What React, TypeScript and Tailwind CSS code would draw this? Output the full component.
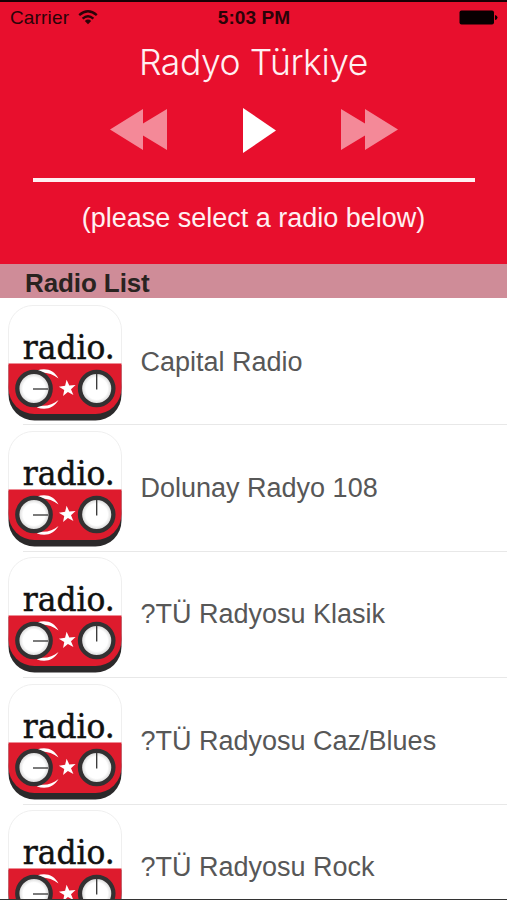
const stations = [
  'Capital Radio',
  'Dolunay Radyo 108',
  '?TÜ Radyosu Klasik',
  '?TÜ Radyosu Caz/Blues',
  '?TÜ Radyosu Rock',
];

function Knob({ cx, turned }: { cx: number; turned: boolean }) {
  return (
    <g>
      <circle cx={cx} cy="83.5" r="16.700" fill="url(#knobFace)" stroke="#333132" strokeWidth="4.300" />
      {turned ? (
        <path d={`M${cx - 1} 84H${cx + 14}`} stroke="#333" strokeWidth="1.3" />
      ) : (
        <path d={`M${cx} 84.500V69`} stroke="#333" strokeWidth="1.3" />
      )}
    </g>
  );
}

function RadioIcon() {
  return (
    <svg className="block h-[116px] w-[114px] shrink-0" viewBox="0 0 114 116">
      <defs>
        <clipPath id="iconShape">
          <rect x="0.5" y="0.5" width="113" height="108.5" rx="26" />
        </clipPath>
        <radialGradient id="knobFace">
          <stop offset="0.65" stopColor="#fff" />
          <stop offset="1" stopColor="#c9c9c9" />
        </radialGradient>
      </defs>
      <rect x="0.5" y="5" width="113" height="110.5" rx="26" fill="#2b292a" />
      <rect x="0.5" y="0.5" width="113" height="100" rx="24" fill="#fff" clipPath="url(#iconShape)" />
      <path d="M0.5 60V25A24.5 24.5 0 0 1 25 0.5H89A24.5 24.5 0 0 1 113.5 25V60" fill="#fff" stroke="#efefef" />
      <rect x="0" y="58.5" width="114" height="52" fill="#de1b2d" clipPath="url(#iconShape)" />
      <path d="M29 65.5C38 62.500 46 65 50.500 73.500C45 69 39 67 31 67.500ZM29 102.500C38 105.500 46 103 50.500 95C45 99.500 39 101.500 31 100.500Z" fill="#fff" />
      <path d="M0 -8.800L2.100 -2.900L8.400 -2.700L3.400 1.100L5.200 7.100L0 3.600L-5.200 7.100L-3.400 1.100L-8.400 -2.700L-2.100 -2.900Z" transform="translate(59.500 83.500) rotate(-6)" fill="#fff" />
      <Knob cx={26} turned />
      <Knob cx={88.7} turned={false} />
      <text x="14.8" y="54.300" textLength="92" lengthAdjust="spacingAndGlyphs" fill="#111" stroke="#111" strokeWidth="0.5" fontSize="33.5" style={{ fontFamily: '"DejaVu Serif", serif' }}>radio.</text>
    </svg>
  );
}

export default function App() {
  return (
    <div className="flex h-[900px] w-[507px] flex-col overflow-hidden border-t-2 border-b border-t-[#180004] border-b-[#333] bg-white font-['Liberation_Sans',Arial,sans-serif]">
      <header className="flex h-[262px] shrink-0 flex-col bg-[#e80f2d]">
        <div className="grid h-8 grid-cols-3 items-center pr-[9px] pl-[10px] text-[19px] text-[#2b0308]">
          <div className="flex items-center gap-[9px]">
            <span className="tracking-[0.15px]">Carrier</span>
            <svg className="-mt-0.5 h-[15px] w-5" viewBox="0 0 20 15">
              <path d="M1.200 5.200Q10 -2.500 18.800 5.200M4.600 8.600Q10 3.800 15.400 8.600" fill="none" stroke="currentColor" strokeWidth="2.400" />
              <path d="M6.800 11Q10 8.200 13.200 11L10 14.300Z" fill="currentColor" />
            </svg>
          </div>
          <span className="text-center font-bold tracking-[0.1px]">5:03 PM</span>
          <svg className="-mt-px h-[15px] w-[39px] justify-self-end" viewBox="0 0 39 15">
            <rect x="0.500" y="0.500" width="34.500" height="14" rx="2" fill="#080001" />
            <path d="M36 5Q38.500 5.500 38.500 7.500T36 10Z" fill="#080001" />
          </svg>
        </div>
        <h1 className="mt-[7px] h-11 text-center font-['Inter',sans-serif] text-[35.5px] leading-11 font-light tracking-[-0.45px] text-[#fff0f2]">Radyo Türkiye</h1>
        <div className="mt-[22px] flex h-[46px] items-start pl-[110px]">
          <svg className="mt-[2px] h-[41px] w-[58px]" viewBox="0 0 58 41">
            <path d="M0 20.500L33 0V14.500L57 0V41L33 26.500V41Z" fill="#f48998" />
          </svg>
          <svg className="ml-[75px] h-[46px] w-[33px]" viewBox="0 0 33 46">
            <path d="M0 1L33 23.500L0 46Z" fill="#fff" />
          </svg>
          <svg className="mt-[2px] ml-[65px] h-[41px] w-[58px]" viewBox="0 0 58 41">
            <path d="M57 20.500L24 0V14.500L0 0V41L24 26.500V41Z" fill="#f48998" />
          </svg>
        </div>
        <div className="mr-8 ml-[33px] mt-[25px] h-1 bg-[#fff0f2]" />
        <p className="mt-5 text-center text-[27px] leading-8 text-[#fff0f2]">(please select a radio below)</p>
      </header>
      <h2 className="h-[34px] shrink-0 bg-[#cf8c98] pl-[25px] text-[26px] leading-[38px] font-bold tracking-[-0.1px] text-[#29231f]">Radio List</h2>
      <ul className="shrink-0 pt-px">
        {stations.map((name) => (
          <li key={name} className="flex h-[126.4px] flex-col pl-[7.500px]">
            <div className="flex flex-1 items-start gap-[19px] pt-[5.500px]">
              <RadioIcon />
              <span className="text-[27px] leading-[115px] whitespace-nowrap text-[#575757]">{name}</span>
            </div>
            <div className="ml-[15px] h-px shrink-0 bg-[#e8e8e8]" />
          </li>
        ))}
      </ul>
    </div>
  );
}
